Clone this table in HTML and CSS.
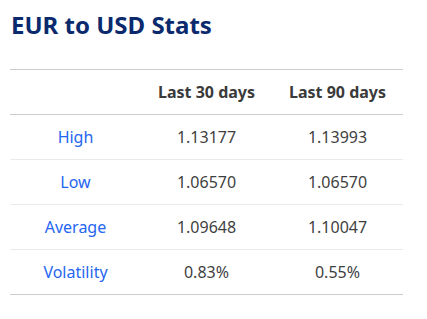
FILE: index.html
```html
<!DOCTYPE html>
<html>
<head>
<meta charset="utf-8">
<link rel="stylesheet" href="styles.css">
</head>
<body>
<div class="stats">
  <h2 class="title">EUR to USD Stats</h2>
  <table class="table">
    <thead>
      <tr><th></th><th>Last 30 days</th><th>Last 90 days</th></tr>
    </thead>
    <tbody>
      <tr><td class="label">High</td><td>1.13177</td><td>1.13993</td></tr>
      <tr><td class="label">Low</td><td>1.06570</td><td>1.06570</td></tr>
      <tr><td class="label">Average</td><td>1.09648</td><td>1.10047</td></tr>
      <tr><td class="label">Volatility</td><td>0.83%</td><td>0.55%</td></tr>
    </tbody>
  </table>
</div>
</body>
</html>
```
FILE: styles.css
```css
html, body {
  margin: 0;
  padding: 0;
  background: #ffffff;
}
body {
  font-family: "Noto Sans", "Open Sans", sans-serif;
}
.stats {
  padding: 8px 24px 0 10px;
}
.title {
  margin: 0 0 0 1px;
  font-size: 24px;
  font-weight: 700;
  line-height: 34px;
  color: #0b2a6e;
}
.table {
  margin-top: 27px;
  width: 393px;
  border-collapse: collapse;
  table-layout: fixed;
  font-size: 16px;
}
.table th {
  height: 44px;
  padding: 0;
  font-weight: 700;
  color: #3a3a3a;
  text-align: center;
  border-top: 1px solid #cccccc;
  border-bottom: 1px solid #cccccc;
}
.table td {
  height: 44px;
  padding: 0;
  text-align: center;
  color: #3f3f3f;
  border-bottom: 1px solid #eaeaea;
}
.table tbody tr:last-child td {
  border-bottom: 1px solid #cccccc;
}
.table td.label {
  color: #2466f0;
}
```
